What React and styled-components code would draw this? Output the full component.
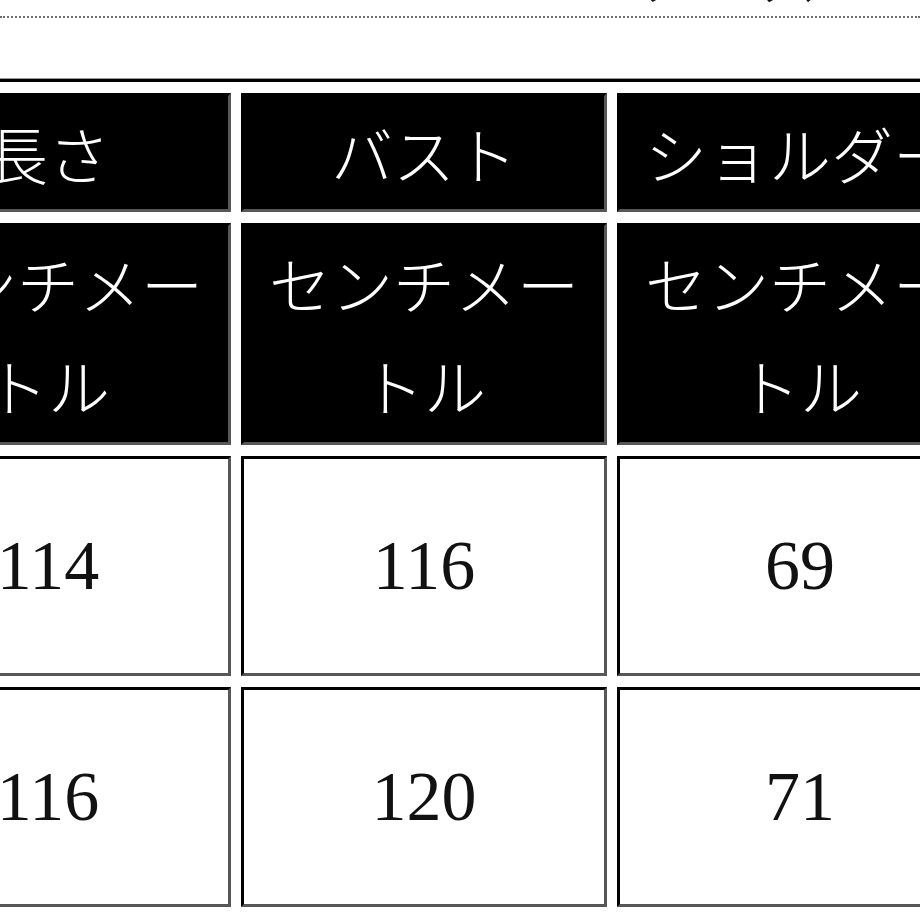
import React from "react";
import styled, { createGlobalStyle } from "styled-components";

const GlobalStyle = createGlobalStyle`
  * { box-sizing: border-box; }
  body {
    margin: 0;
    background: #fff;
    overflow: hidden;
  }
`;

const Page = styled.div`
  width: 920px;
  height: 920px;
  overflow: hidden;
  display: flex;
  flex-direction: column;
`;

// only the bottom tips of the page heading are visible in the crop
const TitleClip = styled.div`
  height: 8px;
  overflow: hidden;
  display: flex;
  align-items: flex-end;
  padding-left: 625px;
`;

const Title = styled.h1`
  margin: 0 0 6px;
  font-family: "Noto Sans CJK JP", sans-serif;
  font-weight: 700;
  font-size: 62px;
  line-height: 62px;
  letter-spacing: 6px;
  color: #111;
  white-space: nowrap;
`;

const Divider = styled.hr`
  margin: 8px 0 0;
  border: 0;
  border-top: 2px dotted #6e6e6e;
  width: 100%;
`;

const TableWrap = styled.div`
  margin-top: 61px;
  margin-left: -148px;
`;

const SizeTable = styled.table`
  table-layout: fixed;
  width: 1141px;
  border-collapse: separate;
  border-spacing: 10px 11px;
  border-top: 3px solid #000;
  border-left: 3px solid #000;
  box-shadow: 0 -1px 0 #9a9a9a;
`;

const Cell = styled.td`
  width: 365px;
  height: ${(p) => p.$h}px;
  padding: 0 6px;
  text-align: center;
  vertical-align: middle;
  border-top: 3px solid #000;
  border-left: 3px solid #000;
  border-right: 3px solid #575757;
  border-bottom: 3px solid #575757;
  background: ${(p) => (p.$head ? "#000" : "#fff")};
  color: ${(p) => (p.$head ? "#fff" : "#111")};
  font-family: ${(p) =>
    p.$head
      ? '"Noto Sans CJK JP", sans-serif'
      : '"Liberation Serif", "Noto Sans CJK JP", serif'};
  font-weight: ${(p) => (p.$head ? 300 : 400)};
  font-size: ${(p) => (p.$head ? 62 : 70)}px;
  line-height: 102px;
`;

const headers = ["長さ", "バスト", "ショルダー"];
const units = ["センチメートル", "センチメートル", "センチメートル"];
const rows = [
  ["114", "116", "69"],
  ["116", "120", "71"],
];

export default function App() {
  return (
    <Page>
      <GlobalStyle />
      <TitleClip>
        <Title>サイズ</Title>
      </TitleClip>
      <Divider />
      <TableWrap>
        <SizeTable>
          <tbody>
            <tr>
              {headers.map((h) => (
                <Cell key={h} $head $h={119}>
                  {h}
                </Cell>
              ))}
            </tr>
            <tr>
              {units.map((u, i) => (
                <Cell key={i} $head $h={222}>
                  {u}
                </Cell>
              ))}
            </tr>
            {rows.map((r, i) => (
              <tr key={i}>
                {r.map((v, j) => (
                  <Cell key={j} $h={220}>
                    {v}
                  </Cell>
                ))}
              </tr>
            ))}
          </tbody>
        </SizeTable>
      </TableWrap>
    </Page>
  );
}
